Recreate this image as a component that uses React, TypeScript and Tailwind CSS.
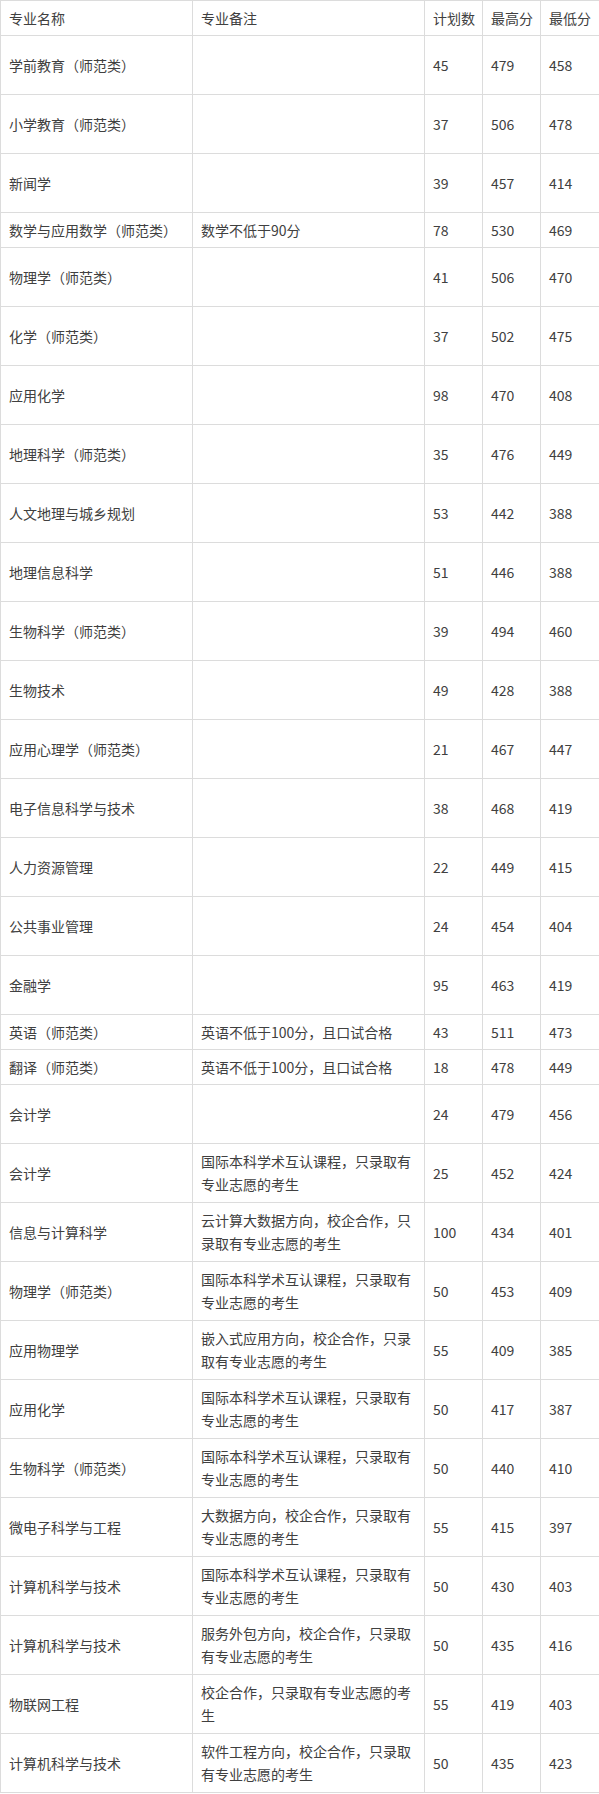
type Row = {
  name: string
  note: string
  plan: string
  max: string
  min: string
  h: 'tall' | 'short'
}

const rows: Row[] = [
  { name: '学前教育（师范类）', note: '', plan: '45', max: '479', min: '458', h: 'tall' },
  { name: '小学教育（师范类）', note: '', plan: '37', max: '506', min: '478', h: 'tall' },
  { name: '新闻学', note: '', plan: '39', max: '457', min: '414', h: 'tall' },
  { name: '数学与应用数学（师范类）', note: '数学不低于90分', plan: '78', max: '530', min: '469', h: 'short' },
  { name: '物理学（师范类）', note: '', plan: '41', max: '506', min: '470', h: 'tall' },
  { name: '化学（师范类）', note: '', plan: '37', max: '502', min: '475', h: 'tall' },
  { name: '应用化学', note: '', plan: '98', max: '470', min: '408', h: 'tall' },
  { name: '地理科学（师范类）', note: '', plan: '35', max: '476', min: '449', h: 'tall' },
  { name: '人文地理与城乡规划', note: '', plan: '53', max: '442', min: '388', h: 'tall' },
  { name: '地理信息科学', note: '', plan: '51', max: '446', min: '388', h: 'tall' },
  { name: '生物科学（师范类）', note: '', plan: '39', max: '494', min: '460', h: 'tall' },
  { name: '生物技术', note: '', plan: '49', max: '428', min: '388', h: 'tall' },
  { name: '应用心理学（师范类）', note: '', plan: '21', max: '467', min: '447', h: 'tall' },
  { name: '电子信息科学与技术', note: '', plan: '38', max: '468', min: '419', h: 'tall' },
  { name: '人力资源管理', note: '', plan: '22', max: '449', min: '415', h: 'tall' },
  { name: '公共事业管理', note: '', plan: '24', max: '454', min: '404', h: 'tall' },
  { name: '金融学', note: '', plan: '95', max: '463', min: '419', h: 'tall' },
  { name: '英语（师范类）', note: '英语不低于100分，且口试合格', plan: '43', max: '511', min: '473', h: 'short' },
  { name: '翻译（师范类）', note: '英语不低于100分，且口试合格', plan: '18', max: '478', min: '449', h: 'short' },
  { name: '会计学', note: '', plan: '24', max: '479', min: '456', h: 'tall' },
  { name: '会计学', note: '国际本科学术互认课程，只录取有专业志愿的考生', plan: '25', max: '452', min: '424', h: 'tall' },
  { name: '信息与计算科学', note: '云计算大数据方向，校企合作，只录取有专业志愿的考生', plan: '100', max: '434', min: '401', h: 'tall' },
  { name: '物理学（师范类）', note: '国际本科学术互认课程，只录取有专业志愿的考生', plan: '50', max: '453', min: '409', h: 'tall' },
  { name: '应用物理学', note: '嵌入式应用方向，校企合作，只录取有专业志愿的考生', plan: '55', max: '409', min: '385', h: 'tall' },
  { name: '应用化学', note: '国际本科学术互认课程，只录取有专业志愿的考生', plan: '50', max: '417', min: '387', h: 'tall' },
  { name: '生物科学（师范类）', note: '国际本科学术互认课程，只录取有专业志愿的考生', plan: '50', max: '440', min: '410', h: 'tall' },
  { name: '微电子科学与工程', note: '大数据方向，校企合作，只录取有专业志愿的考生', plan: '55', max: '415', min: '397', h: 'tall' },
  { name: '计算机科学与技术', note: '国际本科学术互认课程，只录取有专业志愿的考生', plan: '50', max: '430', min: '403', h: 'tall' },
  { name: '计算机科学与技术', note: '服务外包方向，校企合作，只录取有专业志愿的考生', plan: '50', max: '435', min: '416', h: 'tall' },
  { name: '物联网工程', note: '校企合作，只录取有专业志愿的考生', plan: '55', max: '419', min: '403', h: 'tall' },
  { name: '计算机科学与技术', note: '软件工程方向，校企合作，只录取有专业志愿的考生', plan: '50', max: '435', min: '423', h: 'tall' },
]

const cell = 'border border-[#dcdcdc] px-2 py-0 align-middle'
const head = 'border border-[#dcdcdc] px-2 py-0 align-middle whitespace-nowrap'

export default function App() {
  return (
    <div className="w-[599px] bg-white font-['Noto_Sans_CJK_SC','Microsoft_YaHei',sans-serif] text-[14px] leading-[23px] text-[#404040]">
      <table className="w-[599px] table-fixed border-collapse">
        <colgroup>
          <col className="w-[192px]" />
          <col className="w-[232px]" />
          <col className="w-[58px]" />
          <col className="w-[58px]" />
          <col className="w-[59px]" />
        </colgroup>
        <thead>
          <tr className="h-[35px]">
            <td className={head}>专业名称</td>
            <td className={head}>专业备注</td>
            <td className={head}>计划数</td>
            <td className={head}>最高分</td>
            <td className={head}>最低分</td>
          </tr>
        </thead>
        <tbody>
          {rows.map((r, i) => (
            <tr key={i} className={r.h === 'tall' ? 'h-[59px]' : 'h-[35px]'}>
              <td className={cell}>{r.name}</td>
              <td className={cell}>{r.note}</td>
              <td className={cell}>{r.plan}</td>
              <td className={cell}>{r.max}</td>
              <td className={cell}>{r.min}</td>
            </tr>
          ))}
        </tbody>
      </table>
    </div>
  )
}
